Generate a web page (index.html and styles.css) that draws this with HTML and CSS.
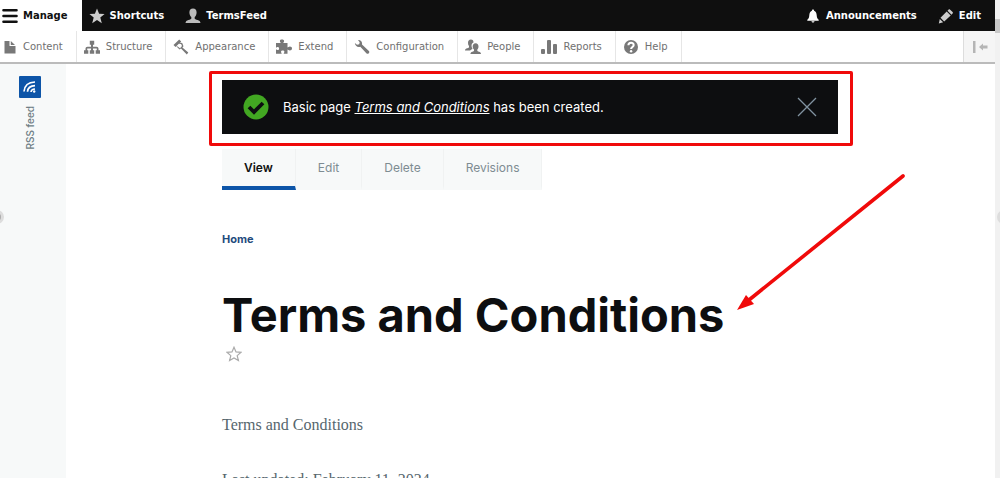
FILE: index.html
```html
<!DOCTYPE html>
<html lang="en">
<head>
    <meta charset="UTF-8">
    <meta name="viewport" content="width=device-width, initial-scale=1.0">
    <title>Terms and Conditions</title>
    <link rel="stylesheet" href="styles.css">
</head>
<body>
    <div class="window">
        <div class="page">
            <nav class="toolbar-bar">
                <a href="#" class="tab tab-active">
                    <svg class="icon" viewBox="0 0 16 16"><path d="M1.5 2.2h13M1.5 8h13M1.5 13.8h13" stroke="#111" stroke-width="2.6" stroke-linecap="round"/></svg>
                    Manage
                </a>
                <a href="#" class="tab">
                    <svg class="icon" viewBox="0 0 16 16"><path fill="#ccc" d="M8 .6l2.1 5.2 5.5.3-4.3 3.5 1.5 5.6L8 12.1l-4.8 3.1 1.5-5.6L.4 6.1l5.5-.3z"/></svg>
                    Shortcuts
                </a>
                <a href="#" class="tab">
                    <svg class="icon" viewBox="0 0 16 16"><path fill="#bbb" d="M8 .6c2.4 0 3.6 1.600 3.600 3.800 0 1.900-.7 3.500-1.900 4.500v1.600c0 .7 1.300 1 2.900 1.500 1.800.5 2.700 1.300 2.900 3H.5c.2-1.700 1.100-2.500 2.900-3 1.600-.5 2.900-.8 2.900-1.500V8.900C5.100 7.900 4.400 6.300 4.400 4.400 4.400 2.200 5.600.6 8 .6z"/></svg>
                    TermsFeed
                </a>
                <a href="#" class="tab tab-right">
                    <svg class="icon" viewBox="0 0 16 16"><path fill="#fff" d="M8 1.500c.8 0 1.100.6 1.100 1.200C11 3.300 11.500 5 11.700 7.200c.2 2.500.7 3.600 2 4.600v1H2.300v-1c1.300-1 1.800-2.100 2-4.600C4.500 5 5 3.300 6.900 2.700c0-.6.3-1.200 1.100-1.200zM6.500 13.200h3c-.2 1-.8 1.300-1.500 1.300s-1.300-.3-1.500-1.300z"/></svg>
                    Announcements
                </a>
                <a href="#" class="tab">
                    <svg class="icon" viewBox="0 0 16 16"><path fill="#ccc" d="M11.900 1.600l2.700 2.500c.5.5.5 1 0 1.500l-1.100 1.100-4-4 1.200-1.200c.4-.4.8-.3 1.200.1zM8.700 3.500l4 4-6.500 6.100-3.700-3.800zM1.800 10.900l3.400 3.300-4.400 1.300z"/></svg>
                    Edit
                </a>
            </nav>

            <nav class="tray">
                <a href="#" class="menu-item">
                    <svg class="icon" viewBox="0 0 16 16"><path fill="#787878" d="M3.500 2h5v5h6v7.500h-11zM9.800 2l4.200 4H9.800z"/></svg>
                    Content
                </a>
                <a href="#" class="menu-item">
                    <svg class="icon" viewBox="0 0 16 16"><path fill="#787878" d="M5.800 1.800h4.400v4H9v2h3.500c1.200 0 2 .8 2 2v1.400H16v3.600h-4.300v-3.600h1.100V9.800c0-.3-.1-.4-.4-.4H9v1.800h1.200v3.600H5.800v-3.600H7V9.400H3.600c-.3 0-.4.1-.4.4v1.400h1.100v3.600H0v-3.600h1.500V9.800c0-1.200.8-2 2-2H7v-2H5.800z"/></svg>
                    Structure
                </a>
                <a href="#" class="menu-item">
                    <svg class="icon" viewBox="0 0 16 16"><path fill="#787878" d="M.5 6.100L6.200.6l2 2-5.700 5.500zM6.500 3.600l2.700.5 1.300 3.200-1.100 1.200 5.900 5-1.500 1.900-5.800-5.800-1.500 1-3.200-3.300 1.400.2 2.300 1.700L9 7l-.9-1.900-2-.3z"/></svg>
                    Appearance
                </a>
                <a href="#" class="menu-item">
                    <svg class="icon" viewBox="0 0 16 16"><path fill="#787878" d="M0 4h4.700c0-.5-.8-.9-.8-1.900C3.900 1 4.800.6 6 .6s2.100.5 2.100 1.500-.8 1.400-.8 1.900h4.200v4.500c.8 0 1.100-1 2.400-1 1.200 0 2.100.7 2.100 1.900 0 1.300-.9 2-2.100 2-1.300 0-1.600-1-2.400-1v4.400H7.700c0-.9.7-1.100.7-2 0-.8-.8-1.200-1.700-1.200s-1.700.4-1.700 1.200c0 .9.7 1.100.7 2H0v-4.300c.9 0 1.100.6 2 .6.700 0 1.100-.7 1.100-1.500S2.700 8 2 8c-.9 0-1.100.6-2 .6z"/></svg>
                    Extend
                </a>
                <a href="#" class="menu-item">
                    <svg class="icon" viewBox="0 0 16 16"><path fill="#787878" d="M4 1.100c2.300-.4 4.500 1.500 4 4.300l6.900 6.500c1.300 1.300-.8 3.900-2.300 2.500L6.300 7.700C3.700 8.700.8 6.800.9 3.900L3 5.700l2.200-.4.500-2z"/></svg>
                    Configuration
                </a>
                <a href="#" class="menu-item">
                    <svg class="icon" viewBox="0 0 16 16"><path fill="#787878" d="M5.900.6c1.800 0 2.700 1.200 2.600 3-1.500.6-2.200 2-1.900 3.800.1 1 .5 1.800 1 2.500-1.200.5-1.900.8-2.400 1.500H0c.1-1.300.9-1.800 2.300-2.200 1.100-.3 1.700-.4 1.700-1V7C3.300 6.300 3 5.300 3 4 3 2 4 .6 5.900.6zM10.600 4.300c1.900 0 2.900 1.300 2.900 3.200 0 1.300-.5 2.400-1.200 3.100v1c0 .6.700.8 1.700 1.100 1.300.4 1.900 1 2 2.400H5.400c.1-1.400.8-2 2-2.400 1-.3 1.600-.5 1.600-1.100v-1c-.8-.7-1.300-1.800-1.300-3.100 0-1.900 1-3.200 2.900-3.200z"/></svg>
                    People
                </a>
                <a href="#" class="menu-item">
                    <svg class="icon" viewBox="0 0 16 16"><g fill="#787878"><rect x="0" y="10" width="4" height="5" rx="1"/><rect x="6" y="1" width="4" height="14" rx="1"/><rect x="12" y="5" width="4" height="10" rx="1"/></g></svg>
                    Reports
                </a>
                <a href="#" class="menu-item">
                    <svg class="icon" viewBox="0 0 16 16"><circle cx="8" cy="8" r="7" fill="#787878"/><path d="M5.400 6.300c0-3.200 5.300-3.200 5.300-.3C10.700 8 8.100 7.900 8.100 10" fill="none" stroke="#fff" stroke-width="2"/><circle cx="8.100" cy="12.300" r="1.200" fill="#fff"/></svg>
                    Help
                </a>
                <button class="orientation" type="button" aria-label="Vertical orientation">
                    <svg class="icon" viewBox="0 0 16 16"><path fill="#b5b5b5" d="M1 2h2.500v12H1zM7 8l4-3.500v2h4.500v3H11v2z"/></svg>
                </button>
            </nav>

            <div class="layout">
                <aside class="social">
                    <a href="#" class="rss">
                        <svg class="rss-icon" viewBox="0 0 22 22"><rect width="22" height="22" rx="1" fill="#0d55a8"/><g fill="none" stroke="#fff" stroke-width="1.700"><path d="M5 15.500C5.500 9.500 9.500 6.200 16 6"/><path d="M8.500 15.800c.3-3.600 3-6 7.500-6.100"/><path d="M12 16c.2-1.800 1.500-2.900 4-3"/></g><circle cx="15.200" cy="15.500" r="1.200" fill="#fff"/></svg>
                        <span class="rss-label">RSS feed</span>
                    </a>
                </aside>

                <main class="content">
                    <div class="message" role="status">
                        <svg class="check" viewBox="0 0 26 26"><circle cx="13" cy="13" r="12.500" fill="#42a722"/><path d="M6 13l5 5 9-9" fill="none" stroke="#0d0e10" stroke-width="3.800"/></svg>
                        <p class="message-text">Basic page <a href="#"><em>Terms and Conditions</em></a> has been created.</p>
                        <button class="close" type="button" aria-label="Close">
                            <svg class="close-icon" viewBox="0 0 20 20"><path d="M1 1l18 18M19 1L1 19" stroke="#8193a0" stroke-width="1.300"/></svg>
                        </button>
                        <!-- highlight frame -->
                        <span class="frame"></span>
                    </div>

                    <nav class="page-tabs">
                        <a href="#" class="page-tab page-tab-active">View</a>
                        <a href="#" class="page-tab">Edit</a>
                        <a href="#" class="page-tab">Delete</a>
                        <a href="#" class="page-tab">Revisions</a>
                    </nav>

                    <a href="#" class="breadcrumb">Home</a>

                    <h1 class="title">Terms and Conditions</h1>
                    <button class="star" type="button" aria-label="Add to shortcuts">
                        <svg class="icon" viewBox="0 0 16 16"><path fill="none" stroke="#aaa" stroke-width="1.200" d="M8 1.200l2 4.700 5.100.4-3.900 3.300 1.200 5L8 11.900l-4.400 2.700 1.200-5L.9 6.300 6 5.900z"/></svg>
                    </button>

                    <div class="text">
                        <p>Terms and Conditions</p>
                        <p>Last updated: February 11, 2024</p>
                    </div>
                </main>
            </div>

            <svg class="arrow" viewBox="0 0 168 138"><path d="M166 2L12 126" stroke="#f00a0a" stroke-width="3.600" stroke-linecap="round"/><path d="M0 136L9 121l8 9z" fill="#f00a0a"/></svg>
            <span class="handle handle-left"></span>
        </div>
        <div class="scrollbar">
            <div class="thumb"></div>
            <span class="handle handle-right"></span>
        </div>
    </div>
</body>
</html>
```

FILE: styles.css
```css
* {
    box-sizing: border-box;
}
body {
    margin: 0;
    background: #fff;
    font-family: Inter, sans-serif;
}
a {
    color: inherit;
    text-decoration: none;
}
button {
    padding: 0;
    border: 0;
    background: none;
}
.window {
    display: flex;
    height: 100vh;
    overflow: hidden;
}
.page {
    position: relative;
    flex: 1;
    overflow: hidden;
}
.icon {
    display: block;
    flex: none;
    width: 16px;
    height: 16px;
}

/* admin toolbar */
.toolbar-bar {
    display: flex;
    height: 31px;
    background: #0f0f0f;
    font: bold 10px "DejaVu Sans", sans-serif;
    color: #fff;
}
.tab {
    display: flex;
    align-items: center;
    gap: 5px;
    padding: 0 14px 0 7px;
}
.tab-active {
    padding-left: 2px;
    background: #fff;
    color: #111;
}
.tab-right {
    margin-left: auto;
}
.tray {
    display: flex;
    height: 33px;
    border-bottom: 2px solid #bbb;
    background: #fff;
    font: 10px "DejaVu Sans", sans-serif;
    color: #707070;
}
.menu-item {
    display: flex;
    align-items: center;
    gap: 6px;
    padding: 0 13px 0 7px;
    border-right: 1px solid #e6e6e6;
}
.menu-item:first-child {
    padding-left: 1px;
}
.orientation {
    display: flex;
    align-items: center;
    justify-content: center;
    width: 32px;
    margin-left: auto;
    border-left: 1px solid #ddd;
    background: #f5f5f5;
}

.layout {
    display: flex;
    min-height: 100%;
}
.social {
    flex: none;
    width: 66px;
    padding: 12px 6px 0 0;
    background: #f7f9f9;
}
.rss {
    display: flex;
    flex-direction: column;
    align-items: center;
    gap: 8px;
}
.rss-icon {
    width: 22px;
    height: 22px;
}
.rss-label {
    writing-mode: vertical-rl;
    transform: rotate(180deg);
    font-size: 10px;
    font-weight: 500;
    line-height: 12px;
    color: #6e7e85;
}

.content {
    flex: 1;
    padding: 16px 157px 0 156px;
}
.message {
    position: relative;
    display: flex;
    align-items: center;
    gap: 14px;
    height: 54px;
    padding: 0 21px;
    background: #0d0e10;
    color: #fff;
}
.frame {
    position: absolute;
    inset: -9px -15px -12px -13px;
    border: 3px solid #f00a0a;
    border-radius: 2px;
    pointer-events: none;
}
.check {
    width: 26px;
    height: 26px;
}
.message-text {
    flex: 1;
    margin: 0;
    font-size: 13px;
    line-height: 18px;
}
.message-text a {
    text-decoration: underline;
}
.close-icon {
    display: block;
    width: 20px;
    height: 20px;
}
.page-tabs {
    display: flex;
    width: fit-content;
    margin-top: 15px;
    background: #f7f9f9;
    font-size: 12px;
    line-height: 16px;
    color: #7e8c92;
}
.page-tab {
    padding: 11px 22px 10px;
    border-right: 1px solid #f0f2f2;
    border-bottom: 4px solid transparent;
}
.page-tab-active {
    border-bottom-color: #0d55a8;
    font-weight: 600;
    color: #111;
}
.breadcrumb {
    display: block;
    width: fit-content;
    margin-top: 41px;
    font-size: 11px;
    font-weight: 700;
    line-height: 16px;
    color: #1f4b7d;
}
.title {
    margin: 40px 0 0;
    font-size: 47px;
    font-weight: 700;
    line-height: 56px;
    color: #0d0e10;
}
.star {
    display: block;
    margin: 3px 0 0 4px;
}
.text {
    margin-top: 51px;
    font-family: "Liberation Serif", serif;
    font-size: 16px;
    line-height: 24px;
    color: #56666d;
}
.text p {
    margin: 0 0 31px;
}

.arrow {
    position: absolute;
    top: 174px;
    left: 737px;
    width: 168px;
    height: 138px;
}

.scrollbar {
    position: relative;
    width: 5px;
    background: #f1f1f1;
}
.thumb {
    height: 14px;
    margin-top: 19px;
    background: #c8c8c8;
}
.handle {
    position: absolute;
    top: 210px;
    width: 14px;
    height: 14px;
    border: 3px solid #ddd;
    border-radius: 50%;
    background: #aaa;
}
.handle-left {
    left: -10px;
}
.handle-right {
    left: 2px;
}
```
